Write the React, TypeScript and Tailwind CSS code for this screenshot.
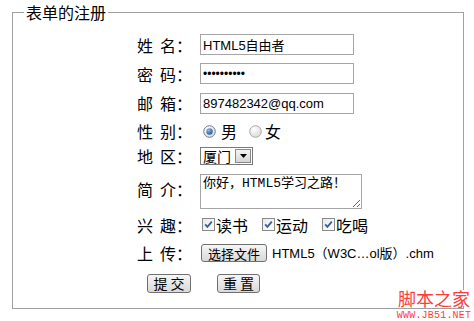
import React from "react";

const cjk = { fontFamily: '"Noto Sans CJK SC", "Liberation Sans", sans-serif' };
const arial = { fontFamily: '"Liberation Sans", "Noto Sans CJK SC", sans-serif' };

function Label({ a, b }: { a: string; b: string }) {
  return (
    <div className="w-[63px] shrink-0 text-[16px] leading-[20px] text-black whitespace-pre" style={cjk}>
      {a}
      <span className="ml-[7px]">{b}</span>
      <span>：</span>
    </div>
  );
}

function Radio({ checked }: { checked?: boolean }) {
  return (
    <svg width="13" height="13" viewBox="0 0 13 13" className="shrink-0">
      <defs>
        <radialGradient id={checked ? "rg1" : "rg0"} cx="0.35" cy="0.3" r="0.8">
          <stop offset="0" stopColor="#ffffff" />
          <stop offset="1" stopColor="#d8d8d8" />
        </radialGradient>
        <radialGradient id="dot" cx="0.35" cy="0.3" r="0.8">
          <stop offset="0" stopColor="#8fb8e8" />
          <stop offset="1" stopColor="#1d4f91" />
        </radialGradient>
      </defs>
      <circle cx="6.5" cy="6.5" r="5.8" fill={`url(#${checked ? "rg1" : "rg0"})`} stroke={checked ? "#6b7f99" : "#a8a8a8"} strokeWidth="1" />
      {checked && <circle cx="6.5" cy="6.5" r="3.2" fill="url(#dot)" />}
    </svg>
  );
}

function Check() {
  return (
    <svg width="13" height="13" viewBox="0 0 13 13" className="shrink-0">
      <defs>
        <linearGradient id="cb" x1="0" y1="0" x2="1" y2="1">
          <stop offset="0" stopColor="#e8e8e8" />
          <stop offset="1" stopColor="#ffffff" />
        </linearGradient>
      </defs>
      <rect x="0.5" y="0.5" width="12" height="12" fill="url(#cb)" stroke="#8a8a8a" />
      <path d="M3.2 6.3 L5.4 8.8 L9.8 3.6" fill="none" stroke="#3a5f9c" strokeWidth="1.8" />
    </svg>
  );
}

function Btn({ children, w }: { children: React.ReactNode; w: string }) {
  return (
    <div
      className={`${w} h-[19px] flex items-center justify-center rounded-[3px] border border-[#707070] bg-gradient-to-b from-[#f6f6f6] to-[#d9d9d9] text-[14px] leading-none text-black whitespace-pre`}
      style={cjk}
    >
      {children}
    </div>
  );
}

export default function App() {
  return (
    <div className="relative w-[474px] h-[321px] bg-white overflow-hidden pt-[1px] pl-[12px]">
      <fieldset className="w-[452px] h-[308px] border border-[#a0a0a0] m-0 p-0">
        <legend className="ml-[11px] px-[2px] text-[16px] leading-[22px] text-black" style={cjk}>
          表单的注册
        </legend>
        <div className="pl-[124px] mt-[7px] flex flex-col">
          <div className="h-[29px] flex items-center">
            <Label a="姓" b="名" />
            <input
              readOnly
              value="HTML5自由者"
              className="w-[154px] h-[21px] border border-[#a5a5a5] px-[2px] text-[13px] text-black outline-none"
              style={arial}
            />
          </div>
          <div className="h-[29px] flex items-center">
            <Label a="密" b="码" />
            <input
              readOnly
              type="password"
              value="1234567890"
              className="w-[154px] h-[21px] border border-[#a5a5a5] px-[2px] text-[12px] text-black outline-none"
              style={arial}
            />
          </div>
          <div className="h-[30px] flex items-center">
            <Label a="邮" b="箱" />
            <input
              readOnly
              value="897482342@qq.com"
              className="w-[154px] h-[21px] border border-[#a5a5a5] px-[2px] text-[13px] text-black outline-none"
              style={arial}
            />
          </div>
          <div className="h-[26px] flex items-center">
            <Label a="性" b="别" />
            <div className="flex items-center text-[16px] leading-[20px] text-black" style={cjk}>
              <span className="ml-[3px]"><Radio checked /></span>
              <span className="ml-[5px]">男</span>
              <span className="ml-[12px]"><Radio /></span>
              <span className="ml-[3px]">女</span>
            </div>
          </div>
          <div className="h-[23px] flex items-center">
            <Label a="地" b="区" />
            <div className="w-[53px] h-[18px] border border-[#7a7a7a] flex items-center bg-white">
              <span className="flex-1 pl-[2px] text-[14px] leading-none text-black" style={cjk}>厦门</span>
              <span className="w-[16px] h-[14px] mr-[1px] border border-[#8a8a8a] bg-gradient-to-b from-[#f4f4f4] to-[#d6d6d6] flex items-center justify-center">
                <svg width="7" height="4" viewBox="0 0 7 4">
                  <path d="M0 0 H7 L3.5 4 Z" fill="#000" />
                </svg>
              </span>
            </div>
          </div>
          <div className="h-[45px] mt-[2px] flex items-center">
            <div className="mb-[6px]">
              <Label a="简" b="介" />
            </div>
            <textarea
              readOnly
              value="你好，HTML5学习之路！"
              className="w-[162px] h-[35px] border border-[#a5a5a5] px-[2px] py-[1px] text-[13px] leading-[15px] text-black outline-none resize"
              style={{ fontFamily: '"Liberation Mono", "Noto Sans CJK SC", monospace' }}
            />
          </div>
          <div className="h-[21px] flex items-center">
            <Label a="兴" b="趣" />
            <div className="flex items-center text-[16px] leading-[20px] text-black" style={cjk}>
              <span className="ml-[2px]"><Check /></span>
              <span className="ml-[1px]">读书</span>
              <span className="ml-[14px]"><Check /></span>
              <span className="ml-[1px]">运动</span>
              <span className="ml-[14px]"><Check /></span>
              <span className="ml-[1px]">吃喝</span>
            </div>
          </div>
          <div className="h-[36px] flex items-center">
            <Label a="上" b="传" />
            <div className="ml-[1px] w-[66px] h-[18px] flex items-center justify-center rounded-[3px] border border-[#707070] bg-gradient-to-b from-[#f6f6f6] to-[#d9d9d9] text-[13px] leading-none text-black" style={cjk}>
              选择文件
            </div>
            <span className="ml-[5px] text-[13px] leading-none text-black whitespace-nowrap" style={arial}>
              HTML5（W3C…ol版）.chm
            </span>
          </div>
          <div className="h-[24px] flex items-center pl-[10px] gap-[26px]">
            <Btn w="w-[44px]">提 交</Btn>
            <Btn w="w-[43px]">重 置</Btn>
          </div>
        </div>
      </fieldset>
      <div className="absolute right-0 bottom-0 w-[80px] flex flex-col items-center">
        <div className="bg-white w-full flex justify-center text-[18px] leading-[16px] text-[#ff3b3b]" style={cjk}>
          脚本之家
        </div>
        <div className="mt-[6px] mb-[2px] text-[10px] leading-[7px] text-[#ff3b3b] tracking-[0.2px]" style={{ fontFamily: '"Liberation Mono", monospace' }}>
          WWW.JB51.NET
        </div>
      </div>
    </div>
  );
}
